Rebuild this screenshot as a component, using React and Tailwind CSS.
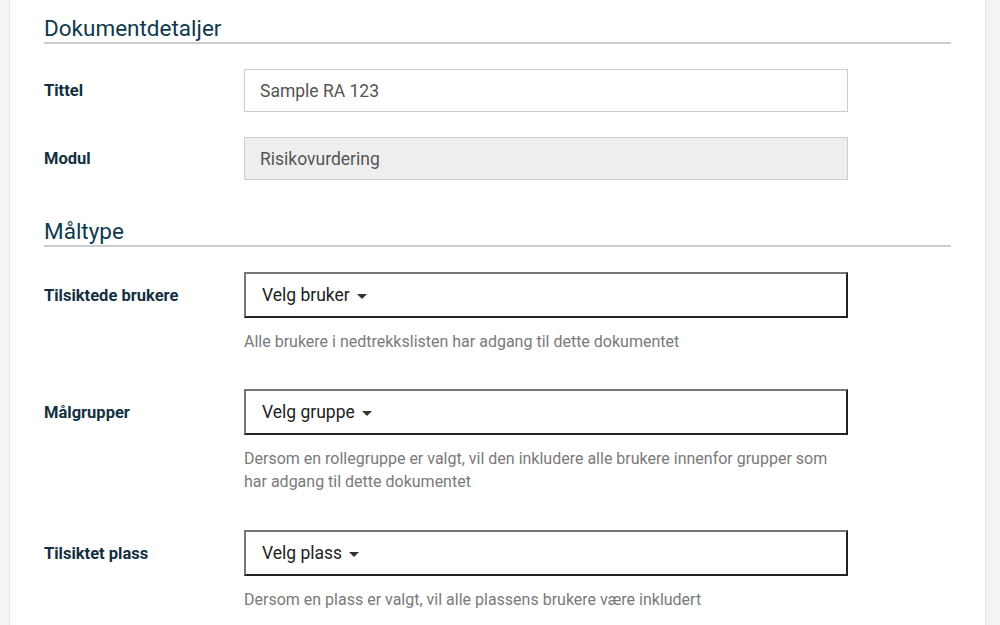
import { useState } from "react";

function SectionTitle({ children, className = "" }) {
  return (
    <h2
      className={`text-[22.5px] leading-[28px] text-[#0f3a4d] border-b-2 border-[#cccccc] ${className}`}
    >
      {children}
    </h2>
  );
}

function FieldRow({ label, children, help, className = "" }) {
  return (
    <div className={`flex ${className}`}>
      <div className="w-[200px] shrink-0 h-[46px] pt-[2px] flex items-center text-[16.5px] font-bold text-[#13303f]">
        {label}
      </div>
      <div className="w-[604px]">
        {children}
        {help && (
          <p className="mt-[12px] text-[16px] leading-[23px] text-[#7a7a7a]">
            {help}
          </p>
        )}
      </div>
    </div>
  );
}

function Dropdown({ text }) {
  const [open, setOpen] = useState(false);
  return (
    <button
      type="button"
      onClick={() => setOpen(!open)}
      className="w-full h-[46px] flex items-center px-[16px] bg-white text-[17.5px] text-[#222222] border-2 border-t-[#767676] border-l-[#767676] border-b-[#222222] border-r-[#222222]"
    >
      <span>{text}</span>
      <span className="ml-[7px] mt-[2px] w-0 h-0 border-l-[5px] border-r-[5px] border-t-[5px] border-l-transparent border-r-transparent border-t-[#333333]" />
    </button>
  );
}

export default function App() {
  return (
    <div
      className="flex h-[625px] bg-[#f4f4f4] overflow-hidden"
      style={{ fontFamily: "Roboto, 'Liberation Sans', sans-serif" }}
    >
      {/* =========== LEFT STRIP =========== */}
      <div className="w-[10px] shrink-0 border-r border-[#e6e6e6]" />

      {/* =========== PANEL =========== */}
      <div className="flex-1 bg-white px-[34px]">
        <SectionTitle className="mt-[14px]">Dokumentdetaljer</SectionTitle>

        <div className="flex items-center mt-[25px]">
          <div className="w-[200px] shrink-0 pt-[2px] text-[16.5px] font-bold text-[#13303f]">
            Tittel
          </div>
          <input
            defaultValue="Sample RA 123"
            className="w-[604px] h-[43px] px-[15px] text-[17.5px] text-[#555555] border border-[#cccccc] outline-none"
          />
        </div>

        <div className="flex items-center mt-[25px]">
          <div className="w-[200px] shrink-0 pt-[2px] text-[16.5px] font-bold text-[#13303f]">
            Modul
          </div>
          <input
            defaultValue="Risikovurdering"
            disabled
            className="w-[604px] h-[43px] px-[15px] text-[17.5px] text-[#555555] bg-[#eeeeee] border border-[#cccccc] outline-none"
          />
        </div>

        <SectionTitle className="mt-[37px]">Måltype</SectionTitle>

        <FieldRow
          label="Tilsiktede brukere"
          className="mt-[25px]"
          help="Alle brukere i nedtrekkslisten har adgang til dette dokumentet"
        >
          <Dropdown text="Velg bruker" />
        </FieldRow>

        <FieldRow
          label="Målgrupper"
          className="mt-[36px]"
          help="Dersom en rollegruppe er valgt, vil den inkludere alle brukere innenfor grupper som har adgang til dette dokumentet"
        >
          <Dropdown text="Velg gruppe" />
        </FieldRow>

        <FieldRow
          label="Tilsiktet plass"
          className="mt-[37px]"
          help="Dersom en plass er valgt, vil alle plassens brukere være inkludert"
        >
          <Dropdown text="Velg plass" />
        </FieldRow>
      </div>

      {/* =========== RIGHT STRIP =========== */}
      <div className="w-[15px] shrink-0 border-l border-[#e6e6e6]" />
    </div>
  );
}
